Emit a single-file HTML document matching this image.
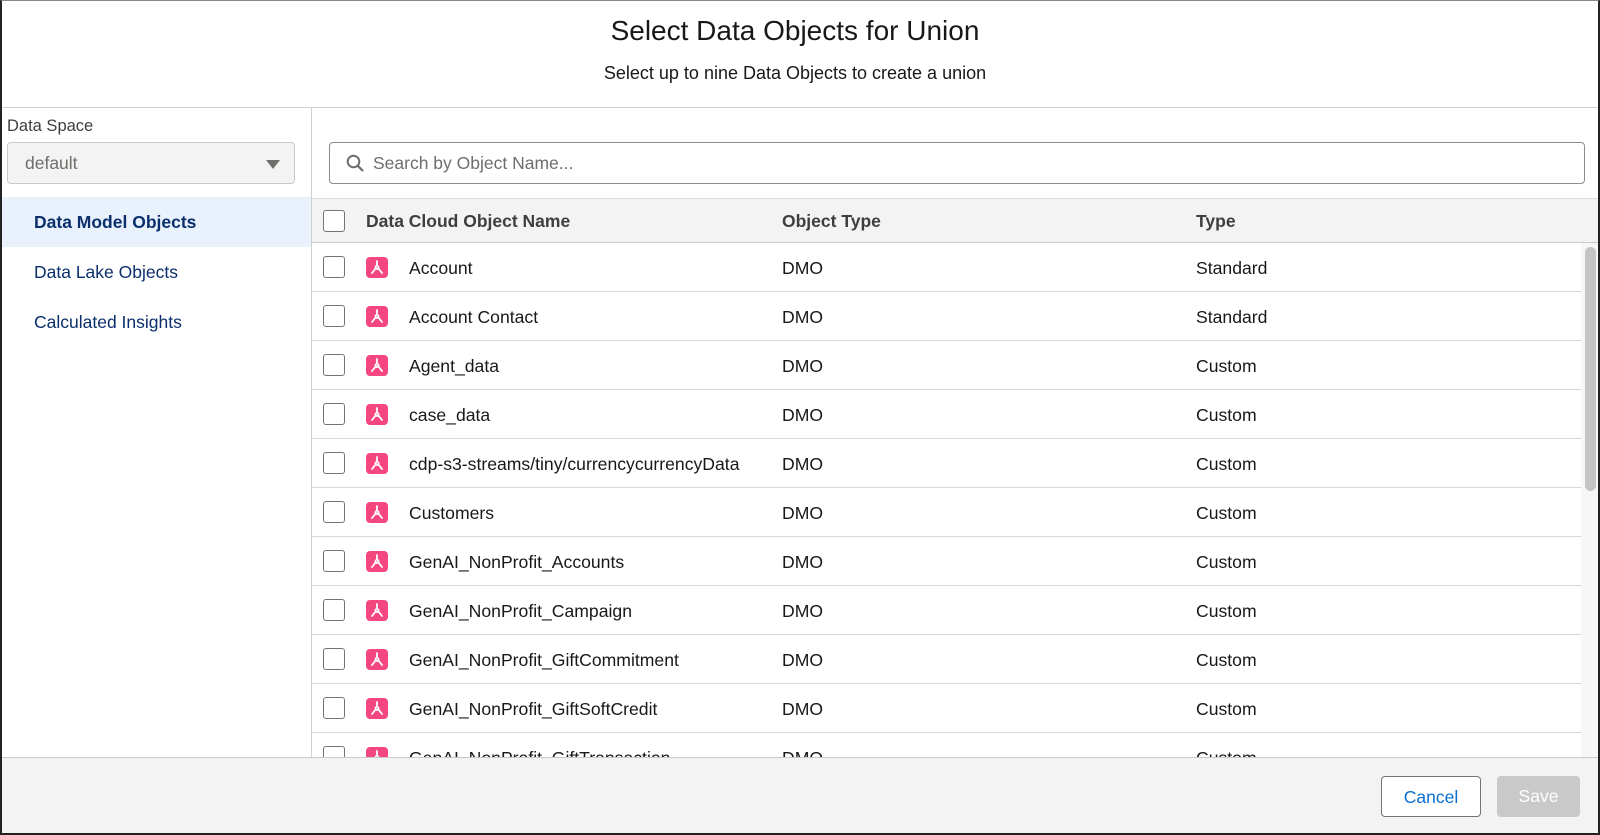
<!DOCTYPE html>
<html><head><meta charset="utf-8"><style>
*{box-sizing:border-box;margin:0;padding:0}
body{width:1600px;height:835px;overflow:hidden;background:#fff;font-family:"Liberation Sans",sans-serif;color:#181818;position:relative}
.frame{position:absolute;left:0;top:0;width:1600px;height:835px;border-left:2px solid #222;border-right:2px solid #222;border-top:1px solid #888;border-bottom:2px solid #222}
.title{position:absolute;top:15px;left:0;width:1590px;text-align:center;font-size:28px;color:#181818}
.sub{position:absolute;top:63px;left:0;width:1590px;text-align:center;font-size:18px}
.hline{position:absolute;top:107px;left:0;width:1600px;height:1px;background:#d0d0d0}
.vline{position:absolute;top:108px;left:311px;width:1px;height:650px;background:#d0d0d0}
.dslabel{position:absolute;left:7px;top:117px;font-size:16.5px;color:#3e3e3c}
.sel{position:absolute;left:7px;top:142px;width:288px;height:42px;border:1px solid #c9c9c9;border-radius:4px;background:#f3f3f3;font-size:17.5px;color:#706e6b;padding:10px 0 0 17px}
.sel:after{content:"";position:absolute;right:14px;top:17px;border-left:7px solid transparent;border-right:7px solid transparent;border-top:9px solid #706e6b}
.nav{position:absolute;left:2px;width:309px;height:50px;font-size:17.5px;color:#0b2f6b;padding:15px 0 0 32px}
.nav.a{background:#e8f1fc;font-weight:bold;color:#0b2f6b}
.search{position:absolute;left:329px;top:142px;width:1256px;height:42px;border:1px solid #8c8c8c;border-radius:4px;font-size:17.5px;color:#706e6b;padding:10px 0 0 43px}
.search svg{position:absolute;left:16px;top:11px}
.thead{position:absolute;left:312px;top:198px;width:1286px;height:45px;background:#f3f3f3;border-top:1px solid #ddd;border-bottom:1px solid #c9c9c9;font-size:17.5px;font-weight:bold;color:#3e3e3c}
.cb{position:absolute;width:22px;height:22px;border:1px solid #747474;border-radius:3px;background:#fff}
.row{position:absolute;left:312px;width:1269px;height:49px;border-bottom:1px solid #d8d8d8;font-size:17.6px}
.row span,.thead span{position:absolute;top:15px}
.ico{position:absolute;left:54px;top:14px;width:22px;height:21px;background:#f4477f;border-radius:4px}
.sb{position:absolute;left:1581px;top:243px;width:17px;height:515px;background:#f7f7f7}
.thumb{position:absolute;left:4px;top:4px;width:11px;height:244px;background:#c4c4c4;border-radius:6px}
.foot{position:absolute;left:0;top:757px;width:1600px;height:78px;background:#f3f3f3;border-top:1px solid #c9c9c9}
.btn{position:absolute;top:18px;height:41px;border-radius:4px;font-size:17.5px;text-align:center;padding-top:10px}
</style></head><body>
<div class="title">Select Data Objects for Union</div>
<div class="sub">Select up to nine Data Objects to create a union</div>
<div class="hline"></div>
<div class="vline"></div>
<div class="dslabel">Data Space</div>
<div class="sel">default</div>
<div class="nav a" style="top:197px">Data Model Objects</div>
<div class="nav" style="top:247px">Data Lake Objects</div>
<div class="nav" style="top:297px">Calculated Insights</div>
<div class="search"><svg width="18" height="18" viewBox="0 0 18 18"><circle cx="7.5" cy="7.5" r="5.8" fill="none" stroke="#706e6b" stroke-width="2"/><path d="M11.8 11.8L16.5 16.5" stroke="#706e6b" stroke-width="2.2" stroke-linecap="round"/></svg>Search by Object Name...</div>
<div class="thead"><div class="cb" style="left:11px;top:11px"></div><span style="left:54px;top:12px">Data Cloud Object Name</span><span style="left:470px;top:12px">Object Type</span><span style="left:884px;top:12px">Type</span></div>
<div class="row" style="top:243px"><div class="cb" style="left:11px;top:13px"></div><div class="ico"><svg width="22" height="21" viewBox="0 0 22 21"><path d="M11 4V9M10 11L6 16M12 11L16 16" stroke="#fff" stroke-width="1.8" stroke-linecap="round"/><circle cx="11" cy="10.5" r="1.8" fill="none" stroke="#fff" stroke-width="1.4"/></svg></div><span style="left:97px">Account</span><span style="left:470px">DMO</span><span style="left:884px">Standard</span></div>
<div class="row" style="top:292px"><div class="cb" style="left:11px;top:13px"></div><div class="ico"><svg width="22" height="21" viewBox="0 0 22 21"><path d="M11 4V9M10 11L6 16M12 11L16 16" stroke="#fff" stroke-width="1.8" stroke-linecap="round"/><circle cx="11" cy="10.5" r="1.8" fill="none" stroke="#fff" stroke-width="1.4"/></svg></div><span style="left:97px">Account Contact</span><span style="left:470px">DMO</span><span style="left:884px">Standard</span></div>
<div class="row" style="top:341px"><div class="cb" style="left:11px;top:13px"></div><div class="ico"><svg width="22" height="21" viewBox="0 0 22 21"><path d="M11 4V9M10 11L6 16M12 11L16 16" stroke="#fff" stroke-width="1.8" stroke-linecap="round"/><circle cx="11" cy="10.5" r="1.8" fill="none" stroke="#fff" stroke-width="1.4"/></svg></div><span style="left:97px">Agent_data</span><span style="left:470px">DMO</span><span style="left:884px">Custom</span></div>
<div class="row" style="top:390px"><div class="cb" style="left:11px;top:13px"></div><div class="ico"><svg width="22" height="21" viewBox="0 0 22 21"><path d="M11 4V9M10 11L6 16M12 11L16 16" stroke="#fff" stroke-width="1.8" stroke-linecap="round"/><circle cx="11" cy="10.5" r="1.8" fill="none" stroke="#fff" stroke-width="1.4"/></svg></div><span style="left:97px">case_data</span><span style="left:470px">DMO</span><span style="left:884px">Custom</span></div>
<div class="row" style="top:439px"><div class="cb" style="left:11px;top:13px"></div><div class="ico"><svg width="22" height="21" viewBox="0 0 22 21"><path d="M11 4V9M10 11L6 16M12 11L16 16" stroke="#fff" stroke-width="1.8" stroke-linecap="round"/><circle cx="11" cy="10.5" r="1.8" fill="none" stroke="#fff" stroke-width="1.4"/></svg></div><span style="left:97px">cdp-s3-streams/tiny/currencycurrencyData</span><span style="left:470px">DMO</span><span style="left:884px">Custom</span></div>
<div class="row" style="top:488px"><div class="cb" style="left:11px;top:13px"></div><div class="ico"><svg width="22" height="21" viewBox="0 0 22 21"><path d="M11 4V9M10 11L6 16M12 11L16 16" stroke="#fff" stroke-width="1.8" stroke-linecap="round"/><circle cx="11" cy="10.5" r="1.8" fill="none" stroke="#fff" stroke-width="1.4"/></svg></div><span style="left:97px">Customers</span><span style="left:470px">DMO</span><span style="left:884px">Custom</span></div>
<div class="row" style="top:537px"><div class="cb" style="left:11px;top:13px"></div><div class="ico"><svg width="22" height="21" viewBox="0 0 22 21"><path d="M11 4V9M10 11L6 16M12 11L16 16" stroke="#fff" stroke-width="1.8" stroke-linecap="round"/><circle cx="11" cy="10.5" r="1.8" fill="none" stroke="#fff" stroke-width="1.4"/></svg></div><span style="left:97px">GenAI_NonProfit_Accounts</span><span style="left:470px">DMO</span><span style="left:884px">Custom</span></div>
<div class="row" style="top:586px"><div class="cb" style="left:11px;top:13px"></div><div class="ico"><svg width="22" height="21" viewBox="0 0 22 21"><path d="M11 4V9M10 11L6 16M12 11L16 16" stroke="#fff" stroke-width="1.8" stroke-linecap="round"/><circle cx="11" cy="10.5" r="1.8" fill="none" stroke="#fff" stroke-width="1.4"/></svg></div><span style="left:97px">GenAI_NonProfit_Campaign</span><span style="left:470px">DMO</span><span style="left:884px">Custom</span></div>
<div class="row" style="top:635px"><div class="cb" style="left:11px;top:13px"></div><div class="ico"><svg width="22" height="21" viewBox="0 0 22 21"><path d="M11 4V9M10 11L6 16M12 11L16 16" stroke="#fff" stroke-width="1.8" stroke-linecap="round"/><circle cx="11" cy="10.5" r="1.8" fill="none" stroke="#fff" stroke-width="1.4"/></svg></div><span style="left:97px">GenAI_NonProfit_GiftCommitment</span><span style="left:470px">DMO</span><span style="left:884px">Custom</span></div>
<div class="row" style="top:684px"><div class="cb" style="left:11px;top:13px"></div><div class="ico"><svg width="22" height="21" viewBox="0 0 22 21"><path d="M11 4V9M10 11L6 16M12 11L16 16" stroke="#fff" stroke-width="1.8" stroke-linecap="round"/><circle cx="11" cy="10.5" r="1.8" fill="none" stroke="#fff" stroke-width="1.4"/></svg></div><span style="left:97px">GenAI_NonProfit_GiftSoftCredit</span><span style="left:470px">DMO</span><span style="left:884px">Custom</span></div>
<div class="row" style="top:733px"><div class="cb" style="left:11px;top:13px"></div><div class="ico"><svg width="22" height="21" viewBox="0 0 22 21"><path d="M11 4V9M10 11L6 16M12 11L16 16" stroke="#fff" stroke-width="1.8" stroke-linecap="round"/><circle cx="11" cy="10.5" r="1.8" fill="none" stroke="#fff" stroke-width="1.4"/></svg></div><span style="left:97px">GenAI_NonProfit_GiftTransaction</span><span style="left:470px">DMO</span><span style="left:884px">Custom</span></div>
<div class="sb"><div class="thumb"></div></div>
<div class="foot">
<div class="btn" style="left:1381px;width:100px;border:1px solid #747474;background:#fff;color:#0b6fd1">Cancel</div>
<div class="btn" style="left:1497px;width:83px;background:#c9c9c9;color:#fff">Save</div>
</div>
<div class="frame"></div>
</body></html>
